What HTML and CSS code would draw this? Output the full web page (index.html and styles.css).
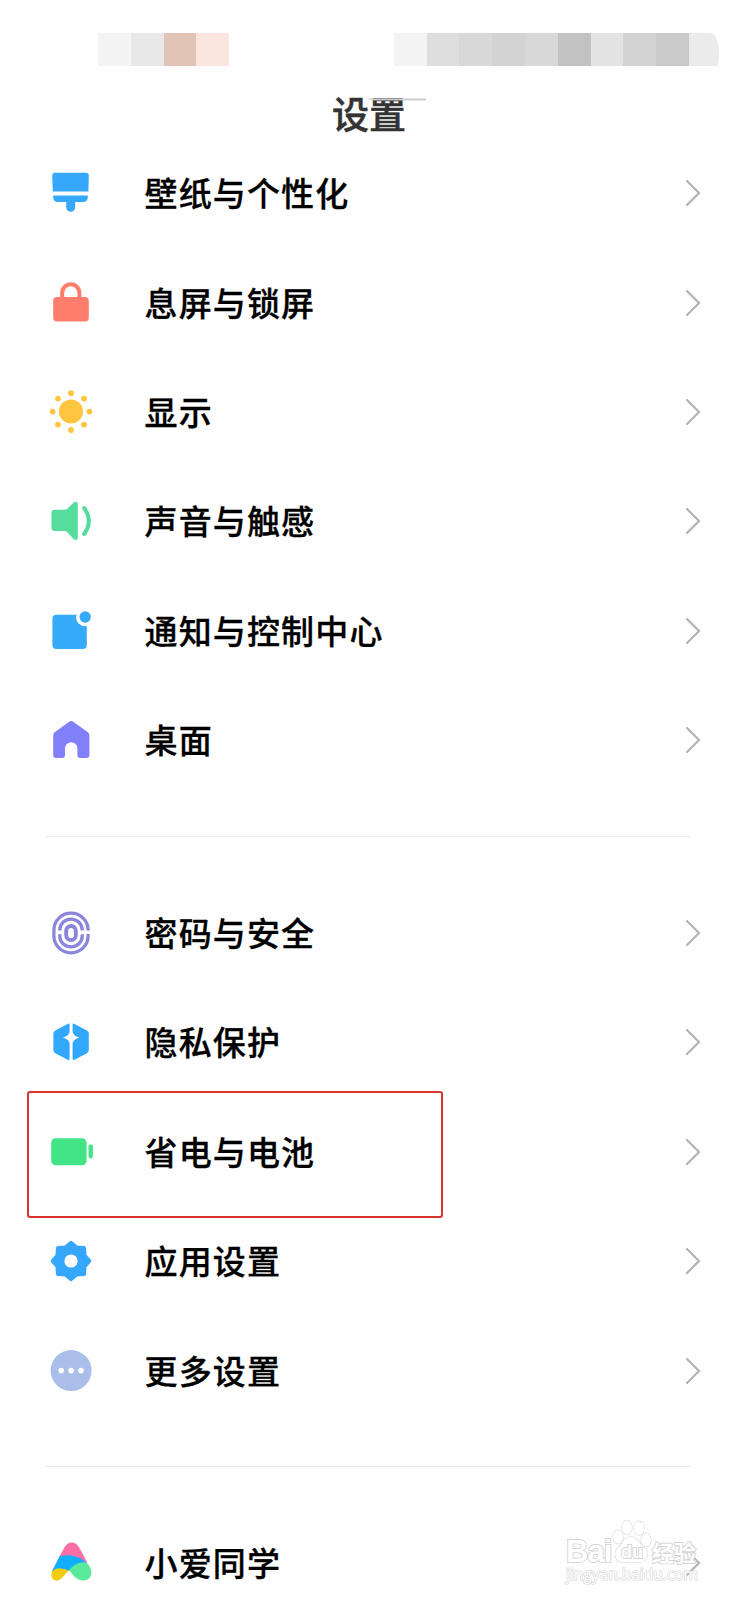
FILE: index.html
```html
<!DOCTYPE html>
<html lang="zh-CN">
<head>
  <meta charset="UTF-8">
  <title>设置</title>
  <link rel="stylesheet" href="styles.css">
</head>
<body>

<svg class="defs" width="0" height="0">
  <symbol id="chevron" viewBox="0 0 16 28">
    <path d="M2 2L14 14L2 26" fill="none" stroke="#b4b4b4" stroke-width="2.2" stroke-linecap="round"/>
  </symbol>
</svg>

<div class="screen">
  <div class="status-bar">
    <div class="mosaic">
      <i class="c1"></i><i class="c2"></i><i class="c3"></i><i class="c4"></i>
    </div>
    <div class="mosaic right">
      <i class="c1"></i><i class="c5"></i><i class="c6"></i><i class="c7"></i><i class="c6"></i><i class="c8"></i><i class="c9"></i><i class="c7"></i><i class="c10"></i><i class="c11"></i>
    </div>
  </div>

  <h1>设置<svg class="scratch" width="60" height="4"><path d="M0 0.5H60V2.5H8Z" fill="#ccc"/></svg></h1>

  <div class="menu">
    <div class="menu-item">
      <svg class="icon" viewBox="0 0 44 44" fill="#35a8fb">
        <path d="M6.2 1.7H36.8Q39.8 1.7 39.8 4.7L39.4 20.6H3.8L3.2 4.7Q3.2 1.7 6.2 1.7Z"/>
        <path d="M4.2 24.4H38.8V26Q38.8 31 34 31H26.2V36.2A4.5 4.5 0 0 1 17.2 36.2V31H9Q4.2 31 4.2 26Z"/>
      </svg>
      <span>壁纸与个性化</span><svg class="arrow"><use href="#chevron"/></svg>
    </div>
    <div class="menu-item">
      <svg class="icon" viewBox="0 0 44 44">
        <path d="M13.2 18V11.8A8.6 8.6 0 0 1 30.4 11.8V18" fill="none" stroke="#fe7d6b" stroke-width="4"/>
        <rect x="4.2" y="16" width="35.6" height="24.4" rx="4" fill="#fe7d6b"/>
      </svg>
      <span>息屏与锁屏</span><svg class="arrow"><use href="#chevron"/></svg>
    </div>
    <div class="menu-item">
      <svg class="icon" viewBox="0 0 44 44" fill="#fec53e">
        <circle cx="22" cy="21.6" r="12"/>
        <circle cx="22" cy="3.2" r="2.9"/><circle cx="22" cy="40" r="2.9"/>
        <circle cx="3.6" cy="21.6" r="2.9"/><circle cx="40.4" cy="21.6" r="2.9"/>
        <circle cx="9" cy="8.6" r="2.9"/><circle cx="35" cy="8.6" r="2.9"/>
        <circle cx="9" cy="34.6" r="2.9"/><circle cx="35" cy="34.6" r="2.9"/>
      </svg>
      <span>显示</span><svg class="arrow"><use href="#chevron"/></svg>
    </div>
    <div class="menu-item">
      <svg class="icon" viewBox="0 0 44 44">
        <path d="M5.5 10.7H15.5Q17.2 10.7 18.5 9.5L24.8 3.4Q28.8 1.2 28.8 5.8V38Q28.8 42.5 24.8 40.2L18.5 33.4Q17.2 32.1 15.5 32.1H5.5Q2.5 32.1 2.5 29.1V13.7Q2.5 10.7 5.5 10.7Z" fill="#56dc9c"/>
        <path d="M35.2 9Q44.4 22 35.2 35" fill="none" stroke="#56dc9c" stroke-width="4" stroke-linecap="round"/>
      </svg>
      <span>声音与触感</span><svg class="arrow"><use href="#chevron"/></svg>
    </div>
    <div class="menu-item">
      <svg class="icon" viewBox="0 0 44 44" fill="#36abfa">
        <rect x="3.4" y="5.7" width="34.4" height="34.4" rx="4"/>
        <circle cx="36.2" cy="8" r="9.2" fill="#fefefe"/>
        <circle cx="36.2" cy="8" r="5.7"/>
      </svg>
      <span>通知与控制中心</span><svg class="arrow"><use href="#chevron"/></svg>
    </div>
    <div class="menu-item">
      <svg class="icon" viewBox="0 0 44 44">
        <path d="M20.2 3.7Q22.2 2.3 24.2 3.7L38.6 14Q40.4 15.4 40.4 17.5V37Q40.4 40 37.4 40H31.2Q28.4 40 28.4 37V30.5A6.2 6.2 0 0 0 16 30.5V37Q16 40 13.2 40H7.2Q4.2 40 4.2 37V17.5Q4.2 15.4 6 14Z" fill="#8180fa"/>
      </svg>
      <span>桌面</span><svg class="arrow"><use href="#chevron"/></svg>
    </div>
  </div>

  <div class="line"></div>

  <div class="menu">
    <div class="menu-item">
      <svg class="icon" viewBox="0 0 44 44" fill="none" stroke="#8c85dc" stroke-width="3.3">
        <path d="M39.1 19.5V19A17.1 16.8 0 0 0 4.9 19V25A17.1 16.8 0 0 0 39.1 25V23"/>
        <path d="M10.8 19.6V18.8A11.2 10.6 0 0 1 33.2 18.8V19.6M33.2 23.2V25.2A11.2 10.6 0 0 1 10.8 25.2V23.2"/>
        <rect x="17.2" y="15" width="9.6" height="14" rx="4.8" stroke-width="3.9"/>
      </svg>
      <span>密码与安全</span><svg class="arrow"><use href="#chevron"/></svg>
    </div>
    <div class="menu-item">
      <svg class="icon" viewBox="0 0 44 44">
        <path d="M18.6 3.9Q20.6 2.8 20.6 5V38.4Q20.6 40.8 18.6 39.7L6.3 33.2Q4.4 32.1 4.4 30V13.6Q4.4 11.5 6.3 10.4ZM25.6 3.9Q23.6 2.8 23.6 5V38.4Q23.6 40.8 25.6 39.7L37.9 33.2Q39.8 32.1 39.8 30V13.6Q39.8 11.5 37.9 10.4Z" fill="#31a8fc"/>
        <path d="M22.1 9Q23.8 15.9 30.2 17.6Q23.8 19.3 22.1 26.2Q20.4 19.3 14 17.6Q20.4 15.9 22.1 9Z" fill="#fefefe"/>
      </svg>
      <span>隐私保护</span><svg class="arrow"><use href="#chevron"/></svg>
    </div>
    <div class="menu-item">
      <svg class="icon" viewBox="0 0 44 44" fill="#43e488">
        <rect x="2.2" y="8.2" width="35.4" height="27" rx="4.5"/>
        <rect x="39.5" y="14.6" width="4.4" height="13.8" rx="1.8"/>
      </svg>
      <span>省电与电池</span><svg class="arrow"><use href="#chevron"/></svg>
      <div class="selector-border"></div>
    </div>
    <div class="menu-item">
      <svg class="icon" viewBox="0 0 44 44">
        <path d="M22 3.5L27.4 8.2L35.2 8.8L35.8 16.6L40.5 22L35.8 27.4L35.2 35.2L27.4 35.8L22 40.5L16.6 35.8L8.8 35.2L8.2 27.4L3.5 22L8.2 16.6L8.8 8.8L16.6 8.2Z" fill="#35a7fc" stroke="#35a7fc" stroke-width="3.6" stroke-linejoin="round"/>
        <circle cx="22" cy="22" r="6.6" fill="#fefefe"/>
      </svg>
      <span>应用设置</span><svg class="arrow"><use href="#chevron"/></svg>
    </div>
    <div class="menu-item">
      <svg class="icon" viewBox="0 0 44 44">
        <circle cx="22.1" cy="21.6" r="20.5" fill="#a9bee9"/>
        <g fill="#fefefe"><circle cx="12.2" cy="21.6" r="2.8"/><circle cx="22.1" cy="21.6" r="2.8"/><circle cx="32" cy="21.6" r="2.8"/></g>
      </svg>
      <span>更多设置</span><svg class="arrow"><use href="#chevron"/></svg>
    </div>
  </div>

  <div class="line"></div>

  <div class="menu">
    <div class="menu-item">
      <svg class="icon" viewBox="0 0 44 44">
        <path d="M15.5 6.2Q18.3 1.4 22.8 1.4Q27.3 1.4 30 6.2L38.5 22Q26 14 10 16.3Z" fill="#fd6ea6"/>
        <path d="M10.6 15.3Q26 11.5 38 21.8L35 27L19 30L7 38L2.6 31Z" fill="#10aefb"/>
        <path d="M2.9 30.5Q7 26.6 12 27.4Q17 28 19.6 29.6L12.4 37.6Q9.8 40 6.5 39.6Q1 38 2.9 30.5Z" fill="#f5cb12"/>
        <path d="M19.4 29.8Q27 20.8 36 21.4Q39 21.6 41.2 26.5Q44.5 34 39 38.2Q35 40.8 29.5 38.6Q25.5 36.5 22.6 32.2Q21.4 30.3 19.4 29.8Z" fill="#5bea9c"/>
      </svg>
      <span>小爱同学</span><svg class="arrow"><use href="#chevron"/></svg>
    </div>
  </div>
</div>

<div class="watermark">
  <div class="brand">
    <span class="bai">Bai</span>
    <span class="paw">
      <svg viewBox="0 0 40 46" fill="#fff" stroke="#d9d9d9" stroke-width="1.2">
        <ellipse cx="6" cy="18" rx="5" ry="6.8"/>
        <ellipse cx="15" cy="8.5" rx="5" ry="7"/>
        <ellipse cx="27" cy="9.2" rx="5" ry="7"/>
        <ellipse cx="34" cy="21" rx="5" ry="6.8"/>
        <path d="M12 21Q19 14 26 21Q29 27 34 30Q37 35 34 40Q31 44 25 43H13Q6 44 4 39Q2 33 6 29Q10 26 12 21Z"/>
      </svg>
      <b>du</b>
    </span>
    <span class="exp">经验</span>
  </div>
  <div class="url">jingyan.baidu.com</div>
</div>

</body>
</html>
```
FILE: styles.css
```css
* {
  box-sizing: border-box;
}

html, body {
  margin: 0;
  padding: 0;
  height: 100%;
  font-family: "Noto Sans CJK SC", sans-serif;
  background-color: #fefefe;
  color: #000;
  overflow: hidden;
}

.defs {
  display: block;
}

.screen {
  width: 738px;
  height: 1600px;
  overflow: hidden;
}

/* pixelated status bar */
.status-bar {
  display: flex;
  justify-content: space-between;
  height: 66px;
  padding: 33px 19px 0 98px;
}

.mosaic {
  display: flex;
}

.mosaic i {
  width: 32.8px;
  height: 33px;
}

.mosaic.right i:last-child {
  width: 30px;
  border-radius: 0 9px 2px 0 / 0 20px 12px 0;
}

.c1 { background-color: #f4f4f4; }
.c2 { background-color: #e8e8e8; }
.c3 { background-color: #e2c4b6; }
.c4 { background-color: #fae6df; }
.c5 { background-color: #dedede; }
.c6 { background-color: #d8d8d8; }
.c7 { background-color: #d3d3d3; }
.c8 { background-color: #c2c2c2; }
.c9 { background-color: #e3e3e3; }
.c10 { background-color: #cacaca; }
.c11 { background-color: #ebebeb; }

h1 {
  position: relative;
  height: 72.6px;
  margin: 0;
  padding-top: 20px;
  font-size: 37px;
  line-height: 54px;
  font-weight: 500;
  text-align: center;
  color: #333;
  -webkit-text-stroke: 0.5px #333;
}

.scratch {
  position: absolute;
  left: 366px;
  top: 32px;
}

.menu {
  display: flex;
  flex-direction: column;
}

.menu-item {
  position: relative;
  display: flex;
  align-items: center;
  height: 109.4px;
  padding: 0 37px 0 49px;
  font-size: 33px;
  font-weight: 500;
  letter-spacing: 1.15px;
}

.menu-item span {
  flex: 1;
  padding-bottom: 2px;
  -webkit-text-stroke: 0.3px #000;
}

.icon {
  width: 44px;
  height: 44px;
  margin-right: 51.5px;
}

.arrow {
  width: 16px;
  height: 28px;
}

.line {
  height: 1px;
  margin: 40.6px 47px 41.8px 45px;
  background-color: #e9e9e9;
}

.selector-border {
  position: absolute;
  top: -6px;
  left: 27px;
  width: 416px;
  height: 127px;
  border: 2px solid #d9342b;
  border-radius: 3px;
}

.watermark {
  position: absolute;
  left: 566px;
  top: 1519px;
  color: #fff;
  -webkit-text-stroke: 1.8px #d4d4d4;
  paint-order: stroke fill;
}

.brand {
  display: flex;
  align-items: flex-end;
  height: 46px;
}

.bai {
  width: 46px;
  font: bold 31px/27px "Liberation Sans", sans-serif;
  letter-spacing: -1px;
}

.paw {
  position: relative;
  width: 40px;
  height: 46px;
}

.paw svg {
  display: block;
  width: 40px;
  height: 46px;
}

.paw b {
  position: absolute;
  left: 9px;
  top: 24px;
  font: bold 18px/18px "Liberation Sans", sans-serif;
}

.exp {
  font-size: 22px;
  line-height: 27px;
  font-weight: 700;
}

.url {
  font: 15.5px/18px "Open Sans", sans-serif;
  -webkit-text-stroke-width: 1.2px;
}
```
